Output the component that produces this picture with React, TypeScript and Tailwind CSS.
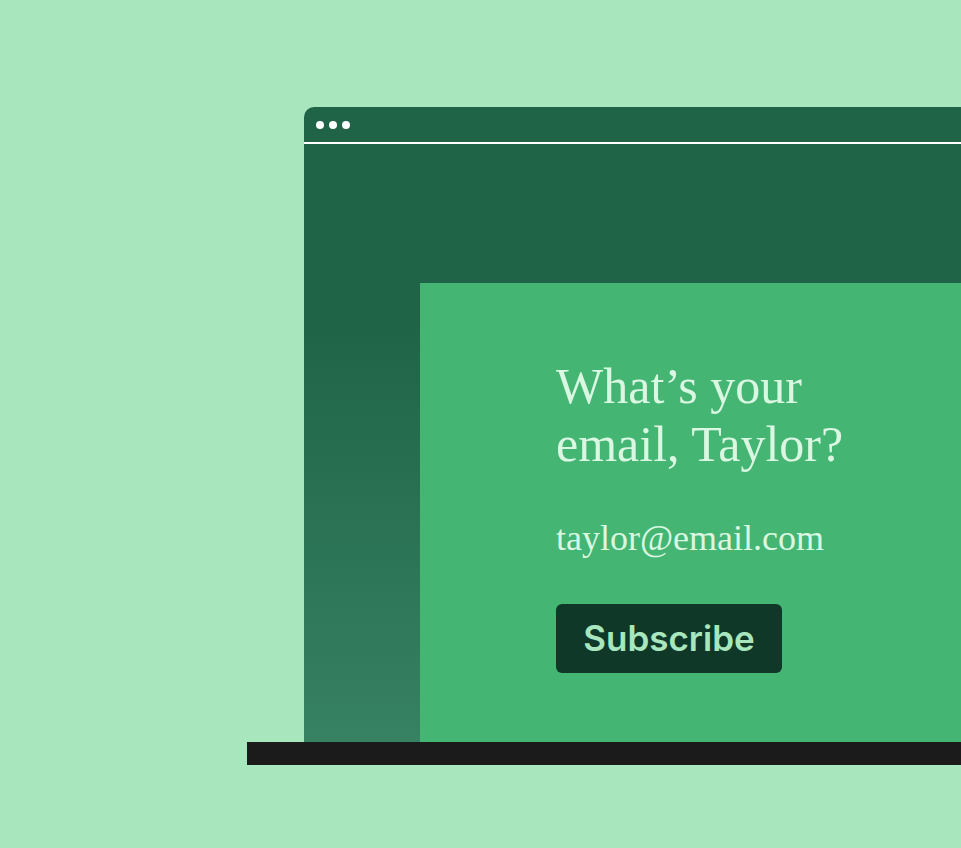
import React from 'react';

function BrowserDots() {
  return (
    <div className="flex items-center gap-[5px] pl-[12px]">
      <span className="block w-[8px] h-[8px] rounded-full bg-white" />
      <span className="block w-[8px] h-[8px] rounded-full bg-white" />
      <span className="block w-[8px] h-[8px] rounded-full bg-white" />
    </div>
  );
}

function App() {
  return (
    <div className="w-[961px] h-[848px] overflow-hidden bg-[#a8e6be]">
      <div className="pt-[107px] pl-[247px]">
        <div className="ml-[57px] w-[700px] rounded-tl-[10px] overflow-hidden bg-[#1f6446]">
          <div className="h-[37px] flex items-center border-b-2 border-white">
            <BrowserDots />
          </div>
          <div className="h-[598px] pt-[139px] pl-[116px] bg-[linear-gradient(to_bottom,#1f6446_0%,#1f6446_30%,#378263_100%)]">
            <div className="h-full bg-[#45b574] pl-[136px] pt-[74px]">
              <h1 className="text-[50px] leading-[58px] text-[#d9f7e1] font-['Liberation_Serif',serif] font-normal">
                What’s your
                <br />
                email, Taylor?
              </h1>
              <p className="mt-[45px] text-[36px] leading-[40px] text-[#d9f7e1] font-['Liberation_Serif',serif]">
                taylor@email.com
              </p>
              <button className="mt-[46px] w-[226px] h-[69px] rounded-[6px] bg-[#103828] text-[#a8e6be] text-[35px] font-semibold font-['Inter',sans-serif]">
                Subscribe
              </button>
            </div>
          </div>
        </div>
        <div className="w-[714px] h-[23px] bg-[#1b1b1b]" />
      </div>
    </div>
  );
}

export default App;
